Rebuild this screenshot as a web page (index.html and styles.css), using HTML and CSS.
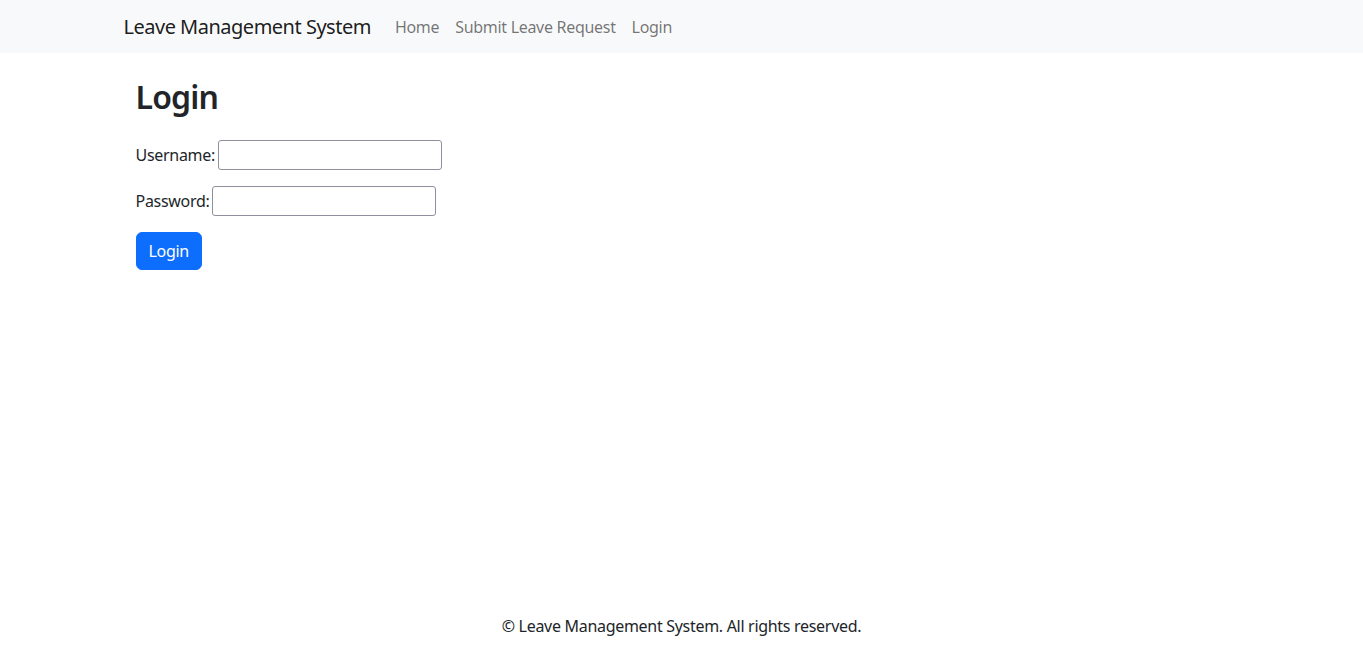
FILE: index.html
```html
<!DOCTYPE html>
<html lang="en">
<head>
<meta charset="utf-8">
<title>Login - Leave Management System</title>
<link rel="stylesheet" href="styles.css">
</head>
<body>
<div class="page">
  <nav class="navbar">
    <div class="container nav-inner">
      <a class="brand" href="#">Leave Management System</a>
      <ul class="nav-links">
        <li><a href="#">Home</a></li>
        <li><a href="#">Submit Leave Request</a></li>
        <li><a href="#">Login</a></li>
      </ul>
    </div>
  </nav>
  <main class="container main">
    <div class="content">
      <h1 class="title">Login</h1>
      <form class="form">
        <div class="field">
          <label for="username">Username:</label>
          <input class="input" type="text" id="username">
        </div>
        <div class="field">
          <label for="password">Password:</label>
          <input class="input" type="password" id="password">
        </div>
        <button class="btn" type="button">Login</button>
      </form>
    </div>
  </main>
  <footer class="footer">© Leave Management System. All rights reserved.</footer>
</div>
</body>
</html>
```

FILE: styles.css
```css
* { box-sizing: border-box; }
html, body { margin: 0; padding: 0; }
body {
  font-family: "Noto Sans", "Open Sans", sans-serif;
  font-size: 16px;
  line-height: 1.5;
  letter-spacing: -0.3px;
  color: #212529;
  background: #fff;
}
.page {
  min-height: 100vh;
  display: flex;
  flex-direction: column;
}
.container {
  width: 1140px;
  margin: 0 auto;
  padding: 0 12px;
}
.navbar {
  background: #f8f9fa;
  height: 53px;
  display: flex;
  align-items: center;
}
.nav-inner {
  display: flex;
  align-items: center;
}
.brand {
  font-size: 20px;
  line-height: 30px;
  letter-spacing: -0.5px;
  color: rgba(0,0,0,0.9);
  text-decoration: none;
  margin-right: 16px;
}
.nav-links {
  display: flex;
  list-style: none;
  margin: 0;
  padding: 0;
}
.nav-links a {
  display: block;
  padding: 8px 8px;
  color: rgba(0,0,0,0.55);
  text-decoration: none;
}
.main {
  flex: 1;
  padding-top: 25px;
}
.content {
  padding: 0 12px;
}
.title {
  font-size: 32px;
  font-weight: 600;
  line-height: 1.2;
  letter-spacing: -0.8px;
  margin: 0 0 24px;
}
.field {
  display: flex;
  align-items: center;
  gap: 3px;
  margin-bottom: 16px;
}
.input {
  width: 224px;
  height: 30px;
  border: 1px solid #8f8f9d;
  border-radius: 3px;
  padding: 2px 4px;
  font: inherit;
  background: #fff;
}
.btn {
  font: inherit;
  letter-spacing: -0.3px;
  background: #0d6efd;
  color: #fff;
  border: 1px solid #0d6efd;
  border-radius: 6px;
  padding: 6px 12px;
  line-height: 24px;
  height: 38px;
  cursor: pointer;
}
.footer {
  text-align: center;
  padding: 16px 0;
  line-height: 24px;
}
```
